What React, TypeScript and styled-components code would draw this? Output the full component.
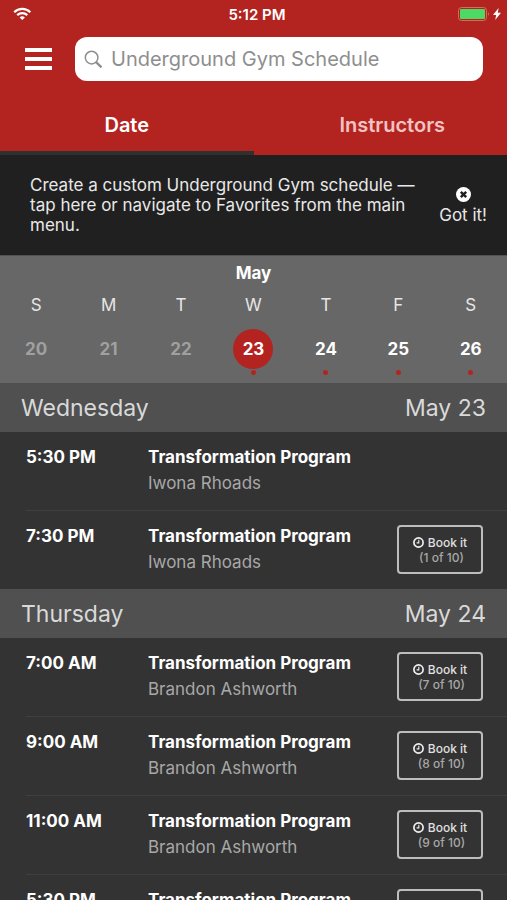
import React from "react";
import styled, { createGlobalStyle } from "styled-components";

const RED = "#b32421";

const GlobalStyle = createGlobalStyle`
  *, *::before, *::after { box-sizing: border-box; }
  body {
    margin: 0;
    background: #333333;
    color: #ffffff;
    font-family: Inter, Roboto, "Liberation Sans", sans-serif;
  }
  button, input { font: inherit; color: inherit; }
  button { border: 0; padding: 0; background: none; cursor: pointer; }
`;

const Screen = styled.div`
  display: flex;
  flex-direction: column;
  height: 100vh;
  overflow: hidden;
`;

const TopBar = styled.header`
  flex: none;
  background: ${RED};
`;

const StatusBar = styled.div`
  display: grid;
  grid-template-columns: 1fr auto 1fr;
  align-items: center;
  height: 28px;
  padding: 0 6px 0 13px;
  font-size: 15px;
  font-weight: 600;
`;

const StatusIcons = styled.div`
  display: flex;
  align-items: center;
  justify-content: flex-end;
  gap: 3px;
`;

const SearchRow = styled.div`
  display: flex;
  align-items: center;
  gap: 23px;
  padding: 9px 24px 0 25px;
`;

const MenuButton = styled.button`
  display: flex;
  flex-direction: column;
  gap: 5px;
  width: 27px;
`;

const MenuBar = styled.span`
  height: 4px;
  background: #ffffff;
`;

const SearchField = styled.label`
  display: flex;
  align-items: center;
  gap: 8px;
  flex: 1;
  min-width: 0;
  height: 44px;
  padding: 0 9px;
  border-radius: 12px;
  background: #ffffff;
`;

const SearchInput = styled.input`
  flex: 1;
  min-width: 0;
  padding: 0;
  border: 0;
  outline: 0;
  background: none;
  color: #333333;
  font-size: 20px;
  &::placeholder { color: #8e8e8e; opacity: 1; }
`;

const Tabs = styled.nav`
  display: grid;
  grid-template-columns: 1fr 1fr;
  height: 74px;
`;

const Tab = styled.button<{ $active?: boolean }>`
  padding-top: 18px;
  padding-left: ${(p) => (p.$active ? 0 : 24)}px;
  border-bottom: 4px solid ${(p) => (p.$active ? "#303030" : RED)};
  color: ${(p) => (p.$active ? "#ffffff" : "#f3c3c3")};
  font-size: 20px;
  font-weight: 600;
`;

const Notice = styled.section`
  display: flex;
  flex: none;
  align-items: center;
  justify-content: space-between;
  height: 100px;
  padding: 0 20px 0 30px;
  background: #202020;
  color: #e8e8e8;
  font-size: 17px;
  line-height: 20px;
`;

const NoticeText = styled.p`
  max-width: 392px;
  margin: 0;
`;

const Dismiss = styled.button`
  display: flex;
  flex-direction: column;
  align-items: center;
  gap: 3px;
  padding-top: 2px;
  white-space: nowrap;
`;

const Calendar = styled.section`
  flex: none;
  height: 128px;
  padding-top: 7px;
  border-top: 1px solid #525252;
  background: #676767;
`;

const Month = styled.h2`
  margin: 0;
  font-size: 17px;
  font-weight: 700;
  line-height: 20px;
  text-align: center;
`;

const Week = styled.div`
  display: grid;
  grid-template-columns: repeat(7, 1fr);
  margin-top: 12px;
`;

const Day = styled.button<{ $past: boolean }>`
  display: flex;
  flex-direction: column;
  align-items: center;
  color: ${(p) => (p.$past ? "#a0a0a0" : "#ffffff")};
`;

const Weekday = styled.span`
  color: #e6e6e6;
  font-size: 17px;
  line-height: 20px;
`;

const DayNumber = styled.span<{ $selected: boolean }>`
  width: 40px;
  height: 40px;
  margin-top: 14px;
  border-radius: 50%;
  background: ${(p) => (p.$selected ? RED : "transparent")};
  font-size: 17px;
  font-weight: 700;
  line-height: 40px;
`;

const Dot = styled.span`
  width: 5px;
  height: 5px;
  margin-top: 1px;
  border-radius: 50%;
  background: ${RED};
`;

const Schedule = styled.main`
  flex: 1;
  min-height: 0;
  overflow-y: auto;
  scrollbar-width: none;
`;

const DayHeader = styled.h3`
  display: flex;
  align-items: center;
  justify-content: space-between;
  height: 49px;
  margin: 0;
  padding: 0 21px;
  background: #505050;
  color: #d9d9d9;
  font-size: 23px;
  font-weight: 400;
`;

const Sessions = styled.ul`
  margin: 0;
  padding: 0 0 0 26px;
  list-style: none;
`;

const Session = styled.li`
  display: flex;
  align-items: flex-start;
  padding-right: 24px;
  border-bottom: 1px solid #3f3f3f;
  &:last-child { border-bottom: 0; }
`;

const Time = styled.time`
  flex: none;
  width: 122px;
  height: 78px;
  padding-top: 15px;
  font-size: 17px;
  font-weight: 700;
  line-height: 20px;
`;

const Details = styled.div`
  flex: 1;
  padding-top: 15px;
  white-space: nowrap;
`;

const Title = styled.div`
  font-size: 17px;
  font-weight: 700;
  line-height: 20px;
`;

const Coach = styled.div`
  margin-top: 6px;
  color: #a8a8a8;
  font-size: 17px;
  line-height: 20px;
`;

const BookButton = styled.button`
  flex: none;
  width: 86px;
  height: 49px;
  margin-top: 14px;
  border: 2px solid #bdbdbd;
  border-radius: 4px;
  color: #e0e0e0;
  font-size: 12px;
  font-weight: 500;
  line-height: 15px;
`;

const BookLabel = styled.span`
  display: flex;
  align-items: center;
  justify-content: center;
  gap: 4px;
`;

const Spots = styled.span`
  display: block;
  padding-left: 3px;
  color: #a8a8a8;
`;

const WifiIcon = () => (
  <svg width="19" height="14" viewBox="0 0 19 14" fill="none" stroke="#fff" strokeWidth="2.2" aria-hidden="true">
    <path d="M1.2 5.2a11.6 11.6 0 0 1 16.1 0M4.2 8.1a7.5 7.5 0 0 1 10.1 0" />
    <path d="M6.6 10.4a4 4 0 0 1 5.3 0L9.25 13.1z" fill="#fff" stroke="none" />
  </svg>
);

const BatteryIcon = () => (
  <svg width="32" height="14" viewBox="0 0 32 14" aria-hidden="true">
    <rect x="0.5" y="0.5" width="28" height="13" rx="3" fill="none" stroke="#d07058" />
    <rect x="2" y="2" width="25" height="10" rx="1" fill="#4cd964" />
    <path d="M30 5q1.6 2 0 4z" fill="#d98a80" />
  </svg>
);

const BoltIcon = () => (
  <svg width="8" height="12" viewBox="0 0 8 12" aria-hidden="true">
    <path d="M5.6 0 0 7h3.2L2.2 12 8 4.8H4.8z" fill="#fff" />
  </svg>
);

const SearchIcon = () => (
  <svg width="19" height="19" viewBox="0 0 19 19" fill="none" stroke="#8e8e8e" aria-hidden="true">
    <circle cx="7.6" cy="7.6" r="6.3" strokeWidth="1.5" />
    <path d="m12.1 12.1 5.4 5.2" strokeWidth="2.3" />
  </svg>
);

const CloseIcon = () => (
  <svg width="15" height="15" viewBox="0 0 15 15" aria-hidden="true">
    <circle cx="7.5" cy="7.5" r="7.5" fill="#fff" />
    <path d="m4.8 4.8 5.4 5.4m0-5.4-5.4 5.4" stroke="#202020" strokeWidth="2.4" />
  </svg>
);

const ClockIcon = () => (
  <svg width="11" height="11" viewBox="0 0 11 11" fill="none" stroke="#f0f0f0" aria-hidden="true">
    <circle cx="5.5" cy="5.5" r="4.6" strokeWidth="1.7" />
    <path d="M5.8 2.8v3.1H3.6" strokeWidth="1.1" />
  </svg>
);

const week = [
  { letter: "S", date: 20 },
  { letter: "M", date: 21 },
  { letter: "T", date: 22 },
  { letter: "W", date: 23 },
  { letter: "T", date: 24 },
  { letter: "F", date: 25 },
  { letter: "S", date: 26 },
];
const today = 23;

const days = [
  {
    name: "Wednesday",
    date: "May 23",
    sessions: [
      { time: "5:30 PM", coach: "Iwona Rhoads" },
      { time: "7:30 PM", coach: "Iwona Rhoads", spots: "(1 of 10)" },
    ],
  },
  {
    name: "Thursday",
    date: "May 24",
    sessions: [
      { time: "7:00 AM", coach: "Brandon Ashworth", spots: "(7 of 10)" },
      { time: "9:00 AM", coach: "Brandon Ashworth", spots: "(8 of 10)" },
      { time: "11:00 AM", coach: "Brandon Ashworth", spots: "(9 of 10)" },
      { time: "5:30 PM", coach: "Iwona Rhoads", spots: "(9 of 10)" },
    ],
  },
];

export default function App() {
  return (
    <Screen>
      <GlobalStyle />
      <TopBar>
        <StatusBar>
          <WifiIcon />
          <span>5:12 PM</span>
          <StatusIcons>
            <BatteryIcon />
            <BoltIcon />
          </StatusIcons>
        </StatusBar>
        <SearchRow>
          <MenuButton aria-label="Menu">
            <MenuBar />
            <MenuBar />
            <MenuBar />
          </MenuButton>
          <SearchField>
            <SearchIcon />
            <SearchInput type="text" aria-label="Search" placeholder="Underground Gym Schedule" />
          </SearchField>
        </SearchRow>
        <Tabs>
          <Tab $active>Date</Tab>
          <Tab>Instructors</Tab>
        </Tabs>
      </TopBar>
      <Notice>
        <NoticeText>
          Create a custom Underground Gym schedule — tap here or navigate to Favorites from the main menu.
        </NoticeText>
        <Dismiss>
          <CloseIcon />
          Got it!
        </Dismiss>
      </Notice>
      <Calendar>
        <Month>May</Month>
        <Week>
          {week.map(({ letter, date }) => (
            <Day key={date} $past={date < today}>
              <Weekday>{letter}</Weekday>
              <DayNumber $selected={date === today}>{date}</DayNumber>
              {date >= today && <Dot />}
            </Day>
          ))}
        </Week>
      </Calendar>
      <Schedule>
        {days.map((day) => (
          <section key={day.name}>
            <DayHeader>
              <span>{day.name}</span>
              <span>{day.date}</span>
            </DayHeader>
            <Sessions>
              {day.sessions.map((s) => (
                <Session key={s.time}>
                  <Time>{s.time}</Time>
                  <Details>
                    <Title>Transformation Program</Title>
                    <Coach>{s.coach}</Coach>
                  </Details>
                  {s.spots && (
                    <BookButton>
                      <BookLabel>
                        <ClockIcon />
                        Book it
                      </BookLabel>
                      <Spots>{s.spots}</Spots>
                    </BookButton>
                  )}
                </Session>
              ))}
            </Sessions>
          </section>
        ))}
      </Schedule>
    </Screen>
  );
}
